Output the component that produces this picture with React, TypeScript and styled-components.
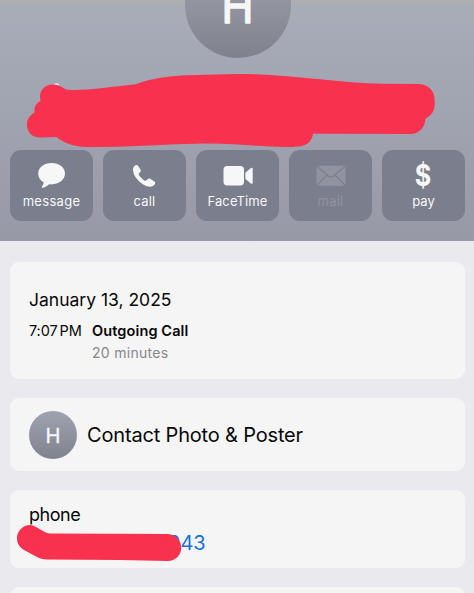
import React from "react";
import styled, { createGlobalStyle } from "styled-components";

const Global = createGlobalStyle`
  * { box-sizing: border-box; }
  html, body { margin: 0; background: #e9e9ee; overflow: hidden; }
  body { font-family: Inter, "Liberation Sans", sans-serif; color: #080808; }
`;

const Screen = styled.main`
  width: 474px;
  height: 593px;
  overflow: hidden;
  background: #e9e9ee;
`;

const Header = styled.header`
  position: relative;
  height: 241px;
  display: flex;
  flex-direction: column;
  align-items: center;
  justify-content: space-between;
  padding: 0 9px 20px 10px;
  background: linear-gradient(#adaeae 0, #adaeae 3px, #a8adb8 5px, #a2a5b2 90px, #9899a7 241px);
`;

const Avatar = styled.div<{ $large?: boolean }>`
  flex: none;
  display: flex;
  align-items: center;
  justify-content: center;
  width: ${(p) => (p.$large ? 106 : 48)}px;
  height: ${(p) => (p.$large ? 106 : 48)}px;
  margin-top: ${(p) => (p.$large ? -48 : 0)}px;
  border-radius: 50%;
  background: ${(p) =>
    p.$large
      ? "linear-gradient(#a2a7b4, #91949f 50%, #7f818d)"
      : "linear-gradient(#9fa2b0, #80828e)"};
`;

const AvatarGlyph = styled.svg`
  display: block;
  font-family: Inter, sans-serif;
  fill: #f6f6f6;
  stroke: #f6f6f6;
  stroke-linejoin: round;
  text-anchor: middle;
`;

const Scribble = styled.svg`
  position: absolute;
  left: 0;
  top: 0;
  pointer-events: none;
`;

const Actions = styled.nav`
  align-self: stretch;
  display: grid;
  grid-template-columns: repeat(5, 83px);
  gap: 10px;
`;

const Action = styled.button<{ $disabled?: boolean }>`
  height: 71px;
  padding: 8px 0 0;
  border: 0;
  border-radius: 11px;
  display: flex;
  flex-direction: column;
  align-items: center;
  gap: 6px;
  background: #7b7e8c;
  color: ${(p) => (p.$disabled ? "#9194a0" : "#f7f7f7")};
  font-family: inherit;
`;

const ActionLabel = styled.span<{ $spacing: number }>`
  font-size: 13px;
  line-height: 18px;
  letter-spacing: ${(p) => p.$spacing}px;
`;

const Cards = styled.section`
  display: flex;
  flex-direction: column;
  padding: 21px 9px 0 10px;
`;

const Card = styled.article<{ $height: number; $gap?: number }>`
  position: relative;
  flex: none;
  height: ${(p) => p.$height}px;
  margin-bottom: ${(p) => p.$gap ?? 19}px;
  padding: 0 19px;
  border-radius: 9px;
  background: #f5f5f5;
`;

const DateTitle = styled.h2`
  margin: 0;
  padding-top: 26px;
  font-size: 17.5px;
  line-height: 23px;
  font-weight: 400;
`;

const CallRow = styled.div`
  display: grid;
  grid-template-columns: 63px 1fr;
  margin-top: 9px;
  font-size: 14px;
  line-height: 22px;
`;

const Time = styled.span`
  font-size: 14.5px;
  letter-spacing: -0.1px;
  word-spacing: -2px;
`;

const CallKind = styled.strong`
  font-size: 14.5px;
  font-weight: 600;
  letter-spacing: 0.12px;
`;

const Duration = styled.span`
  grid-column: 2;
  color: #87878a;
  letter-spacing: 0.3px;
`;

const PosterCard = styled(Card)`
  display: flex;
  align-items: center;
  gap: 10px;
`;

const PosterTitle = styled.span`
  font-size: 20px;
  letter-spacing: -0.17px;
`;

const PhoneLabel = styled.div`
  padding-top: 13px;
  font-size: 18px;
  line-height: 23px;
  letter-spacing: -0.45px;
`;

const PhoneNumber = styled.div`
  margin-top: 4px;
  padding-left: 139px;
  color: #1670dc;
  font-size: 20px;
  line-height: 26px;
`;

const PhoneScribble = styled(Scribble)`
  left: 0;
  top: 30px;
`;

const Message = () => (
  <svg width="28" height="28" viewBox="0.4 0 28 28" fill="currentColor" overflow="visible">
    <path d="M14 5C6.400 5 .6 9.300 .6 15.400C.6 19.100 2.600 22.400 6.200 24.400C5.900 26 5.200 27.300 4.400 28.500C3.700 29.500 4.600 30 5.600 29.700C8.100 29 10 27.700 11.600 26.300C20.600 27.100 27.400 22.200 27.400 15.600C27.400 9.300 21.600 5 14 5Z" />
  </svg>
);

const Phone = () => (
  <svg width="28" height="28" viewBox="0.8 0 28 28" fill="currentColor" overflow="visible">
    <path d="M5.700 7.100C4.100 7.900 2.600 9.700 2.800 12.200C3.300 19.600 12.200 28.200 19.700 28.700C22.100 28.800 24.100 27.500 24.900 25.800C25.300 24.800 25 24.100 24.200 23.500L20.100 20.800C19.100 20.200 18.300 20.400 17.400 21.200L16 22.500C15.400 22.900 14.900 22.900 14.300 22.500C12.500 21.300 9.800 18.700 8.700 16.900C8.300 16.300 8.400 15.800 8.800 15.300L10.100 13.900C10.800 13.100 10.800 12.400 10.200 11.400L7.800 7.700C7.200 6.800 6.500 6.700 5.700 7.100Z" />
  </svg>
);

const Video = () => (
  <svg width="30" height="28" viewBox="0 0 30 28" fill="currentColor">
    <rect x=".5" y="8" width="20.500" height="19.500" rx="3.700" />
    <path d="M22.400 14.700L27.600 10.200C28.700 9.300 29.700 9.600 29.700 10.800V24.700C29.700 25.900 28.700 26.200 27.600 25.300L22.400 20.900Z" />
  </svg>
);

const Mail = () => (
  <svg width="30" height="28" viewBox="0 0 30 28">
    <rect x=".5" y="7.700" width="29" height="20" rx="2" fill="currentColor" />
    <path d="M1.200 8.500L13 18.600Q15 20.300 17 18.600L28.800 8.500M1.200 27L10.700 17.400M28.800 27L19.300 17.400" fill="none" stroke="#7b7e8c" strokeWidth="1.300" />
  </svg>
);

const DollarGlyph = styled.svg`
  overflow: visible;
  font-family: Inter, sans-serif;
  text-anchor: middle;
`;

const Dollar = () => (
  <DollarGlyph width="28" height="28" fill="currentColor">
    <text x="13" y="28" fontSize="30" fontWeight="700" textLength="16.500" lengthAdjust="spacingAndGlyphs">$</text>
  </DollarGlyph>
);

const actions = [
  { label: "message", icon: <Message />, spacing: 0.3 },
  { label: "call", icon: <Phone />, spacing: 0.2 },
  { label: "FaceTime", icon: <Video />, spacing: 0.1 },
  { label: "mail", icon: <Mail />, spacing: 0.2, disabled: true },
  { label: "pay", icon: <Dollar />, spacing: 0 },
];

export default function App() {
  return (
    <Screen>
      <Global />
      <Header>
        <Avatar $large>
          <AvatarGlyph width="60" height="60" strokeWidth="1.600">
            <text x="29.500" y="47.700" fontSize="47" fontWeight="400" textLength="32" lengthAdjust="spacingAndGlyphs">H</text>
          </AvatarGlyph>
        </Avatar>
        <Actions>
          {actions.map((a) => (
            <Action key={a.label} $disabled={a.disabled}>
              {a.icon}
              <ActionLabel $spacing={a.spacing}>{a.label}</ActionLabel>
            </Action>
          ))}
        </Actions>
        <Scribble width="474" height="160">
          <ellipse cx="56.500" cy="84.700" rx="2.500" ry="1.500" fill="#f6f6f6" />
          <path
            fill="#f8314f"
            d="M40 97C40 89 46 84.500 53 84.500C58 84.500 61 86.500 64 88.500Q67 90 73 90C93 90 113 86.500 135 84.500C152 78 171 75.500 196 75L237 74C285 73.500 338 83 382 83.700L418 84C428 84 435 91 434.500 100C435.500 109 433 115 425.500 118.500C425 127 420 133.500 411 134L313 133.700C312 141 307 146 298 146.500C270 149 237 142 196 143.700C158 144.500 119 147.500 86 147C73 146.500 64 143 56.500 137L40 137.500C32 137.500 27 132 27 125C27 119 30 115 34.500 112.500C34 107 36 103 40.500 101Z"
          />
        </Scribble>
      </Header>
      <Cards>
        <Card $height={117}>
          <DateTitle>January 13, 2025</DateTitle>
          <CallRow>
            <Time>7:07 PM</Time>
            <CallKind>Outgoing Call</CallKind>
            <Duration>20 minutes</Duration>
          </CallRow>
        </Card>
        <PosterCard $height={73}>
          <Avatar>
            <AvatarGlyph width="30" height="30" strokeWidth="0.400">
              <text x="15" y="22.500" fontSize="20.500" fontWeight="400" textLength="15" lengthAdjust="spacingAndGlyphs">H</text>
            </AvatarGlyph>
          </Avatar>
          <PosterTitle>Contact Photo &amp; Poster</PosterTitle>
        </PosterCard>
        <Card $height={78}>
          <PhoneLabel>phone</PhoneLabel>
          <PhoneNumber>943</PhoneNumber>
          <PhoneScribble width="190" height="48">
            <path
              fill="#f8314f"
              d="M20 5C13 5 7 11 7 18C7 24 10 28 15 30.500L28 37.500Q32 39.500 37 39.500L110 40L158 41C165 41 171.300 35 171.300 28C171.300 20 165 14 157 14L40 13.600Q37 13.500 34 11.500L26 7Q23 5 20 5Z"
            />
          </PhoneScribble>
        </Card>
        <Card $height={60} $gap={0} />
      </Cards>
    </Screen>
  );
}
